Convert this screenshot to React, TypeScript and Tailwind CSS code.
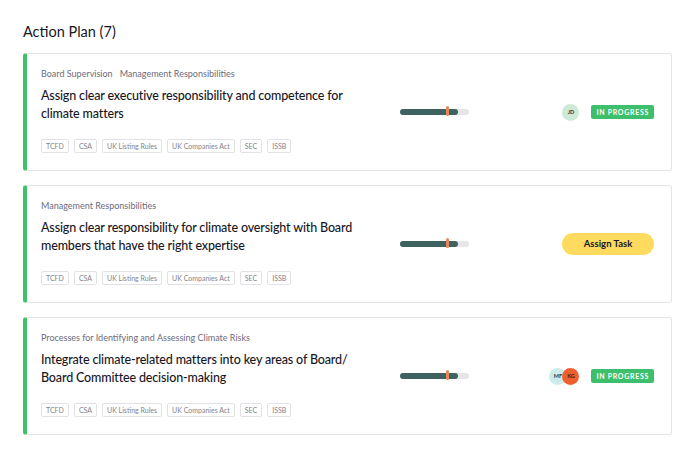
import React from 'react';

type Person = { initials: string; bg: string; text: string };

type Action = {
  categories: string[];
  title: string;
  progress: number;
  people: Person[];
  status: 'in-progress' | 'unassigned';
};

const tags = ['TCFD', 'CSA', 'UK Listing Rules', 'UK Companies Act', 'SEC', 'ISSB'];

const actions: Action[] = [
  {
    categories: ['Board Supervision', 'Management Responsibilities'],
    title: 'Assign clear executive responsibility and competence for climate matters',
    progress: 84,
    people: [{ initials: 'JD', bg: 'bg-[#cfe9d7]', text: 'text-[#2b3a36]' }],
    status: 'in-progress',
  },
  {
    categories: ['Management Responsibilities'],
    title: 'Assign clear responsibility for climate oversight with Board members that have the right expertise',
    progress: 84,
    people: [],
    status: 'unassigned',
  },
  {
    categories: ['Processes for Identifying and Assessing Climate Risks'],
    title: 'Integrate climate-related matters into key areas of Board/ Board Committee decision-making',
    progress: 84,
    people: [
      { initials: 'MF', bg: 'bg-[#cdebea]', text: 'text-[#2b3a36]' },
      { initials: 'KG', bg: 'bg-[#f0602f]', text: 'text-[#3a1a10]' },
    ],
    status: 'in-progress',
  },
];

function ProgressBar({ value }: { value: number }) {
  return (
    <div className="relative h-[6px] w-[69px] rounded-full bg-[#e6e6e9]">
      <div className="h-full rounded-full bg-[#3e625f]" style={{ width: `${value}%` }} />
      <div className="absolute left-[46px] top-[-3px] h-[10px] w-[3px] rounded-full bg-[#e8875c]" />
    </div>
  );
}

function ActionCard({ action }: { action: Action }) {
  return (
    <div className="flex items-center rounded-[3px] border border-[#e4e4e8] border-l-4 border-l-[#3cc26b] bg-white pl-[14px] pr-[17px] py-[13px]">
      <div className="w-[345px] pb-[4px]">
        <div className="flex gap-[7px] text-[9px] leading-[14px] text-[#6c6c7c]">
          {action.categories.map((c) => (
            <span key={c}>{c}</span>
          ))}
        </div>
        <h3 className="mt-[6px] w-[312px] text-[12.5px] font-medium leading-[18px] tracking-[-0.15px] text-[#17171f]">
          {action.title}
        </h3>
        <div className="mt-4 flex gap-[5px]">
          {tags.map((t) => (
            <span
              key={t}
              className="flex h-[14px] items-center rounded-[2px] border border-[#e2e2e6] px-[4px] text-[7px] text-[#83838e]"
            >
              {t}
            </span>
          ))}
        </div>
      </div>
      <div className="ml-[14px]">
        <ProgressBar value={action.progress} />
      </div>
      <div className="flex flex-1 items-center justify-end">
        {action.status === 'unassigned' ? (
          <button className="h-[22px] w-[92px] rounded-full bg-[#fedb5f] text-[9.5px] font-bold text-[#17171f]">
            Assign Task
          </button>
        ) : (
          <>
            <div className="flex">
              {action.people.map((p, i) => (
                <div
                  key={p.initials}
                  className={`flex h-[17px] w-[17px] items-center justify-center rounded-full text-[5.5px] font-bold ${p.bg} ${p.text} ${i > 0 ? '-ml-[4px]' : ''}`}
                >
                  {p.initials}
                </div>
              ))}
            </div>
            <span className="ml-[12px] flex h-[14px] items-center rounded-[2px] bg-[#3dc06d] px-[5px] text-[7px] font-bold tracking-[0.1em] text-white">
              IN PROGRESS
            </span>
          </>
        )}
      </div>
    </div>
  );
}

export default function App() {
  return (
    <div
      className="min-h-screen w-[700px] bg-white px-[23px] pt-[22px]"
      style={{ fontFamily: 'Lato, "Noto Sans", sans-serif' }}
    >
      <h2 className="text-[14.5px] leading-[20px] text-[#17171f]">Action Plan (7)</h2>
      <div className="mt-[11px] flex w-[649px] flex-col gap-[14px]">
        {actions.map((a) => (
          <ActionCard key={a.title} action={a} />
        ))}
      </div>
    </div>
  );
}
